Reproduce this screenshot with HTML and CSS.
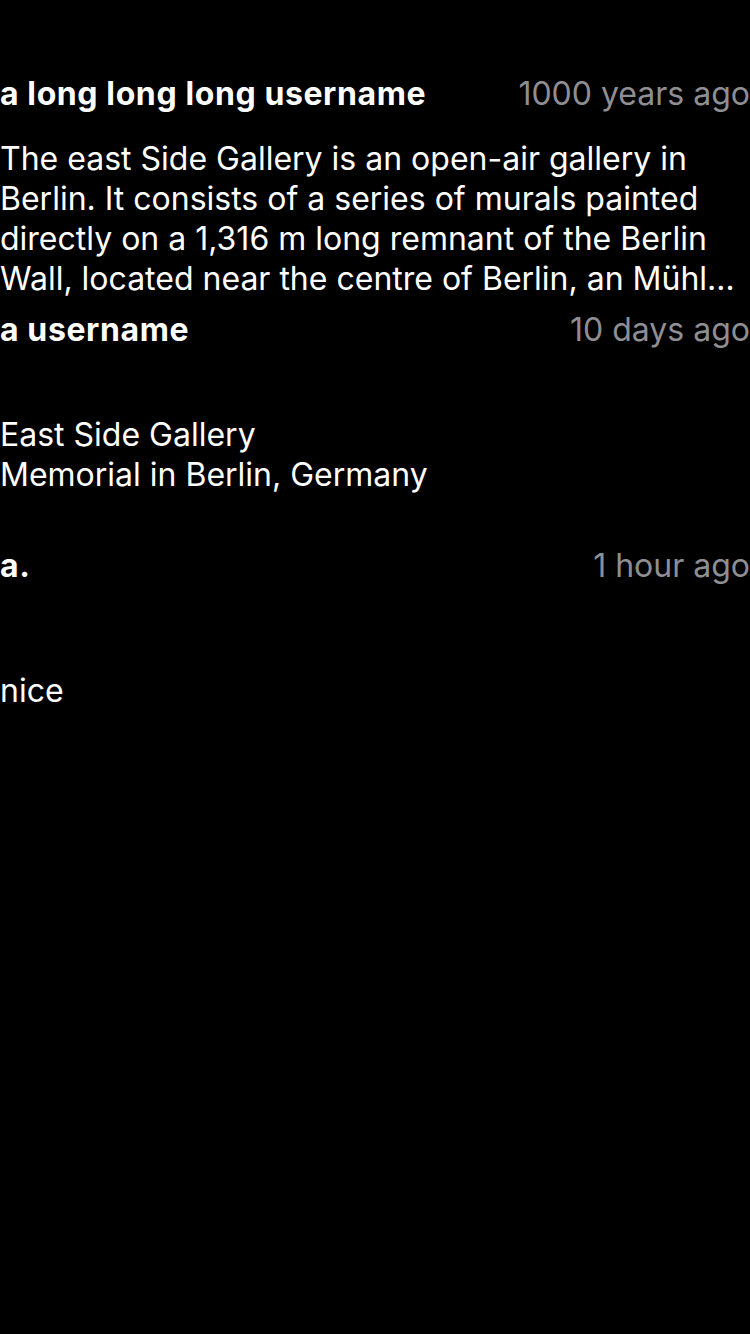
FILE: index.html
```html
<!DOCTYPE html>
<html lang="en">
<head>
<meta charset="utf-8">
<title>Comments</title>
<link rel="stylesheet" href="styles.css">
</head>
<body>
<main class="comments">
  <article class="comment">
    <header class="comment-head">
      <span class="author">a long long long username</span>
      <time class="time">1000 years ago</time>
    </header>
    <div class="comment-body">
      <p class="text">The east Side Gallery is an open-air gallery in<br>Berlin. It consists of a series of murals painted<br>directly on a 1,316 m long remnant of the Berlin<br>Wall, located near the centre of Berlin, an Mühl…</p>
    </div>
  </article>
  <article class="comment">
    <header class="comment-head">
      <span class="author">a username</span>
      <time class="time">10 days ago</time>
    </header>
    <div class="comment-body">
      <p class="text">East Side Gallery<br>Memorial in Berlin, Germany</p>
    </div>
  </article>
  <article class="comment">
    <header class="comment-head">
      <span class="author">a.</span>
      <time class="time">1 hour ago</time>
    </header>
    <div class="comment-body">
      <p class="text">nice</p>
    </div>
  </article>
</main>
</body>
</html>
```

FILE: styles.css
```css
* { box-sizing: border-box; }
html, body {
  margin: 0;
  padding: 0;
  background: #000;
}
body {
  width: 750px;
  min-height: 1334px;
  color: #fff;
  font-family: Inter, "Noto Sans", sans-serif;
  font-size: 32px;
  line-height: 40px;
}
.comments {
  display: flex;
  flex-direction: column;
  gap: 11px;
  padding-top: 74px;
}
.comment {
  display: flex;
  flex-direction: column;
  gap: 25px;
}
.comment-head {
  display: flex;
  justify-content: space-between;
  align-items: center;
  height: 40px;
}
.author {
  font-weight: 700;
  letter-spacing: 0.6px;
}
.time {
  color: #8e8e93;
}
.comment-body {
  height: 160px;
  display: flex;
  flex-direction: column;
  justify-content: center;
}
.text {
  margin: 0;
}
```
